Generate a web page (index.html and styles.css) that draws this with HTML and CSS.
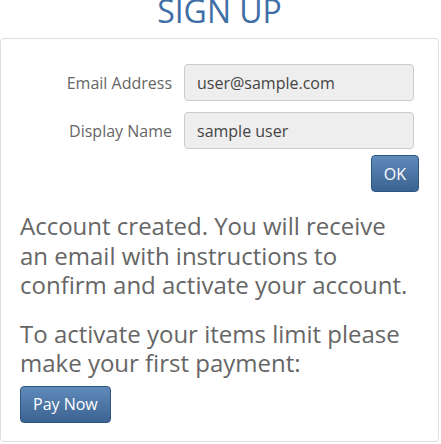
FILE: index.html
```html
<!DOCTYPE html>
<html lang="en">
	<head>
		<meta charset="UTF-8" />
		<meta name="viewport" content="width=device-width, initial-scale=1.0" />
		<title>Sign Up</title>
		<link rel="stylesheet" href="styles.css">
	</head>
	<body>
		<h1 class="title">SIGN UP</h1>
		<div class="panel">
			<form class="signup-form">
				<label class="field-label" for="email">Email Address</label>
				<input class="field-input" id="email" type="text" value="user@sample.com" disabled />
				<label class="field-label" for="name">Display Name</label>
				<input class="field-input" id="name" type="text" value="sample user" disabled />
			</form>
			<div class="form-actions">
				<button class="btn" type="button">OK</button>
			</div>
			<p class="message">Account created. You will receive an email with instructions to confirm and activate your account.</p>
			<p class="message">To activate your items limit please make your first payment:</p>
			<button class="btn" type="button">Pay Now</button>
		</div>
	</body>
</html>
```

FILE: styles.css
```css
body {
	margin: 0;
	font-family: 'Open Sans', 'Noto Sans', sans-serif;
	background: #fff;
	color: #666;
	width: 439px;
}
.title {
	margin: 0 0 16px;
	font-size: 32px;
	font-weight: 400;
	line-height: 22px;
	text-align: center;
	color: #3f6fa5;
}
.panel {
	border: 1px solid #ddd;
	border-radius: 4px;
	padding: 25px 19px 18px;
}
.signup-form {
	display: grid;
	grid-template-columns: 152px 230px;
	column-gap: 12px;
	row-gap: 11px;
	align-items: center;
}
.field-label {
	text-align: right;
	font-size: 16px;
	color: #666;
}
.field-input {
	box-sizing: border-box;
	height: 37px;
	padding: 0 12px;
	font-family: inherit;
	font-size: 16px;
	color: #444;
	background: #eee;
	border: 1px solid #ccc;
	border-radius: 4px;
}
.form-actions {
	display: flex;
	justify-content: flex-end;
	margin-top: 6px;
}
.btn {
	box-sizing: border-box;
	height: 37px;
	padding: 0 12px;
	font-family: inherit;
	font-size: 16px;
	color: #fff;
	background: linear-gradient(to bottom, #5f8aba 0%, #3b6391 100%);
	border: 1px solid #2f5683;
	border-radius: 4px;
}
.message {
	margin: 19px 0 0;
	font-size: 24px;
	line-height: 29.5px;
	color: #666;
}
.message + .message {
	margin-top: 19px;
}
.message + .btn {
	margin-top: 8px;
}
```
